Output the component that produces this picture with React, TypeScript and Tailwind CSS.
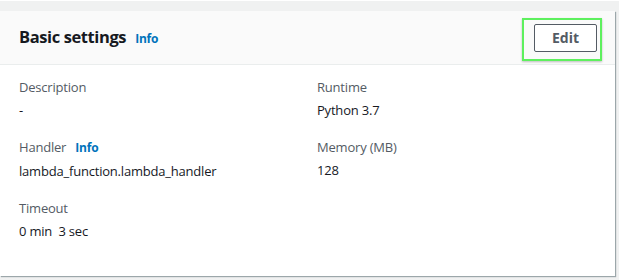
const font = { fontFamily: '"Open Sans", "Liberation Sans", sans-serif' };

const fields = [
  { label: "Description", value: "-" },
  { label: "Runtime", value: "Python 3.7" },
  { label: "Handler", value: "lambda_function.lambda_handler", info: true },
  { label: "Memory (MB)", value: "128" },
  { label: "Timeout", value: "0 min\u00a0\u00a03 sec" },
];

function Info() {
  return (
    <a href="#" className="ml-[9px] text-[12px] font-bold tracking-[-0.2px] text-[#0073bb] no-underline">
      Info
    </a>
  );
}

export default function App() {
  return (
    <div
      style={font}
      className="w-[619px] h-[280px] overflow-hidden bg-[#f0f1f1] border-t border-white pt-[10px]"
    >
      <div className="relative w-[615px] h-[265px] bg-white shadow-[1px_1px_1px_0_rgba(0,28,36,0.35)]">
        {/* Header */}
        <div className="flex items-center justify-between h-[54px] bg-[#fafafa] border-b border-[#eaeded] pl-[19px] pr-[18px]">
          <div className="flex items-baseline">
            <h2 className="text-[16.5px] font-bold text-[#16191f] tracking-[-0.4px]">Basic settings</h2>
            <Info />
          </div>
          <button className="w-[63px] h-[28px] rounded-[2px] border border-[#545b64] bg-white text-[14px] font-bold text-[#545b64]">
            Edit
          </button>
        </div>

        {/* Highlight box around Edit */}
        <div className="absolute left-[522px] top-[7px] w-[80px] h-[43px] border-2 border-[#5ef05e] shadow-[0_1px_2px_rgba(0,0,0,0.25)] pointer-events-none" />

        {/* Body */}
        <div className="grid grid-cols-[298px_298px] gap-y-[17px] pl-[19px] pt-[12px]">
          {fields.map((f) => (
            <div key={f.label} className="flex flex-col">
              <div className="flex items-baseline text-[13px] leading-[20px] tracking-[-0.2px] text-[#545b64]">
                {f.label}
                {f.info && <Info />}
              </div>
              <div className="mt-[3px] text-[13px] leading-[20px] tracking-[-0.2px] text-[#16191f]">
                {f.value}
              </div>
            </div>
          ))}
        </div>
      </div>
    </div>
  );
}
